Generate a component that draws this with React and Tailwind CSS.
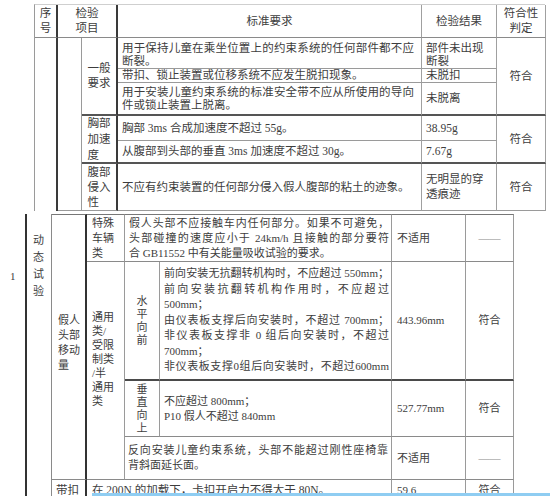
import React from "react";

const L = ({ lines, j = [], className = "" }) => (
  <div className={className}>
    {lines.map((t, i) => (
      <div key={i} className={j.includes(i) ? "[text-align-last:justify] text-justify" : ""}>
        {t}
      </div>
    ))}
  </div>
);

export default function App() {
  return (
    <div className="relative h-[496px] w-[550px] overflow-hidden bg-white text-[#3d3d3d] font-['Liberation_Serif','Noto_Sans_CJK_SC',serif]">
      {/* top piece */}
      <div className="ml-[34px] mt-[4px] grid w-[511px] grid-cols-[23px_24px_36px_304px_75px_49px] grid-rows-[33px_31px_14px_33px_25px_23px_47px] border-l border-t border-l-[#9a9a9a] border-t-[#cfcfcf] text-[11.5px] leading-[13px]">
        {/* header */}
        <div className="col-start-1 row-start-1 flex items-center justify-center border-b border-r-2 border-b-[#8a8a8a] border-r-[#3a3a3a] text-center">
          <L lines={["序", "号"]} className="leading-[15px]" />
        </div>
        <div className="col-start-2 col-span-2 row-start-1 flex items-center justify-center border-b border-r-2 border-b-[#8a8a8a] border-r-[#3a3a3a] text-center">
          <L lines={["检验", "项目"]} className="leading-[15px]" />
        </div>
        <div className="col-start-4 row-start-1 flex items-center justify-center border-b border-r border-b-[#8a8a8a] border-r-[#a0a0a0]">
          标准要求
        </div>
        <div className="col-start-5 row-start-1 flex items-center justify-center border-b border-r border-b-[#8a8a8a] border-r-[#a0a0a0]">
          检验结果
        </div>
        <div className="col-start-6 row-start-1 flex items-center justify-center border-b border-r border-b-[#8a8a8a] border-r-[#a0a0a0] text-center">
          <L lines={["符合性", "判定"]} className="leading-[15px]" />
        </div>

        {/* left blank columns */}
        <div className="col-start-1 row-start-2 row-span-6 border-r-2 border-r-[#3a3a3a]" />
        <div className="col-start-2 row-start-2 row-span-6 border-b border-r border-b-[#9a9a9a] border-r-[#9a9a9a]" />

        {/* 一般要求 */}
        <div className="col-start-3 row-start-2 row-span-3 flex items-center justify-center border-b-2 border-r-2 border-b-[#555] border-r-[#3a3a3a]">
          <L lines={["一般", "要求"]} className="leading-[15px]" />
        </div>
        <div className="col-start-4 row-start-2 border-b border-r border-b-[#9a9a9a] border-r-[#a0a0a0] pl-[4px] pr-[7px] pt-[4px]">
          <L lines={["用于保持儿童在乘坐位置上的约束系统的任何部件都不应", "断裂。"]} j={[0]} />
        </div>
        <div className="col-start-5 row-start-2 border-b border-r border-b-[#9a9a9a] border-r-[#a0a0a0] pl-[4px] pt-[4px]">
          <L lines={["部件未出现", "断裂"]} />
        </div>
        <div className="col-start-4 row-start-3 flex items-center border-b border-r border-b-[#9a9a9a] border-r-[#a0a0a0] pl-[4px]">
          带扣、锁止装置或位移系统不应发生脱扣现象。
        </div>
        <div className="col-start-5 row-start-3 flex items-center border-b border-r border-b-[#9a9a9a] border-r-[#a0a0a0] pl-[4px]">
          未脱扣
        </div>
        <div className="col-start-4 row-start-4 flex items-center border-b-2 border-r border-b-[#555] border-r-[#a0a0a0] pl-[4px] pr-[7px]">
          <L lines={["用于安装儿童约束系统的标准安全带不应从所使用的导向", "件或锁止装置上脱离。"]} j={[0]} className="w-full" />
        </div>
        <div className="col-start-5 row-start-4 flex items-center border-b-2 border-r border-b-[#555] border-r-[#a0a0a0] pl-[4px]">
          未脱离
        </div>
        <div className="col-start-6 row-start-2 row-span-3 flex items-center justify-center border-b-2 border-r border-b-[#555] border-r-[#a0a0a0]">
          符合
        </div>

        {/* 胸部加速度 */}
        <div className="col-start-3 row-start-5 row-span-2 flex items-center justify-center border-b-2 border-r-2 border-b-[#555] border-r-[#3a3a3a]">
          <L lines={["胸部", "加速", "度"]} className="leading-[16px]" />
        </div>
        <div className="col-start-4 row-start-5 flex items-center border-b border-r border-b-[#9a9a9a] border-r-[#a0a0a0] pl-[4px]">
          胸部 3ms 合成加速度不超过 55g。
        </div>
        <div className="col-start-5 row-start-5 flex items-center border-b border-r border-b-[#9a9a9a] border-r-[#a0a0a0] pl-[4px]">
          38.95g
        </div>
        <div className="col-start-4 row-start-6 flex items-center border-b-2 border-r border-b-[#555] border-r-[#a0a0a0] pl-[4px]">
          从腹部到头部的垂直 3ms 加速度不超过 30g。
        </div>
        <div className="col-start-5 row-start-6 flex items-center border-b-2 border-r border-b-[#555] border-r-[#a0a0a0] pl-[4px]">
          7.67g
        </div>
        <div className="col-start-6 row-start-5 row-span-2 flex items-center justify-center border-b-2 border-r border-b-[#555] border-r-[#a0a0a0]">
          符合
        </div>

        {/* 腹部侵入性 */}
        <div className="col-start-3 row-start-7 flex items-center justify-center border-b border-r-2 border-b-[#9a9a9a] border-r-[#3a3a3a]">
          <L lines={["腹部", "侵入", "性"]} className="leading-[15px]" />
        </div>
        <div className="col-start-4 row-start-7 flex items-center border-b border-r border-b-[#9a9a9a] border-r-[#a0a0a0] pl-[4px]">
          不应有约束装置的任何部分侵入假人腹部的粘土的迹象。
        </div>
        <div className="col-start-5 row-start-7 flex items-center border-b border-r border-b-[#9a9a9a] border-r-[#a0a0a0] pl-[4px]">
          <L lines={["无明显的穿", "透痕迹"]} className="leading-[15px]" />
        </div>
        <div className="col-start-6 row-start-7 flex items-center justify-center border-b border-r border-b-[#9a9a9a] border-r-[#a0a0a0]">
          符合
        </div>
      </div>

      {/* bottom piece */}
      <div className="mt-[3px] grid w-[514px] grid-cols-[27px_25px_35px_38px_35px_232px_74px_48px] grid-rows-[48px_119px_56px_43px_30px] text-[11px] leading-[15px]">
        <div className="col-start-1 row-start-1 row-span-5 border-r-2 border-r-[#333] pl-[10px] pt-[55px]">
          1
        </div>
        <div className="col-start-2 row-start-1 row-span-5 border-r border-r-[#8a8a8a] pl-[6px] pt-[18px]">
          <L lines={["动", "态", "试", "验"]} className="leading-[17px]" />
        </div>
        <div className="col-start-3 row-start-1 row-span-4 flex items-center border-b border-r-2 border-t border-b-[#8a8a8a] border-r-[#333] border-t-[#777] pb-[8px] pl-[6px]">
          <L lines={["假人", "头部", "移动", "量"]} className="leading-[15px]" />
        </div>
        <div className="col-start-3 row-start-5 border-r-2 border-r-[#333] pl-[4px] pt-[3px] text-[11.5px]">
          带扣
        </div>

        {/* 特殊车辆类 */}
        <div className="col-start-4 row-start-1 flex items-center border-b border-r border-t border-b-[#8a8a8a] border-r-[#9a9a9a] border-t-[#777] pl-[5px]">
          <L lines={["特殊", "车辆", "类"]} />
        </div>
        <div className="col-start-5 col-span-2 row-start-1 flex items-center border-b border-r border-t border-b-[#8a8a8a] border-r-[#9a9a9a] border-t-[#777] pl-[4px] pr-[2px]">
          <L
            lines={[
              "假人头部不应接触车内任何部分。如果不可避免，",
              "头部碰撞的速度应小于 24km/h 且接触的部分要符",
              "合 GB11552 中有关能量吸收试验的要求。",
            ]}
            j={[0, 1]}
            className="w-full"
          />
        </div>
        <div className="col-start-7 row-start-1 flex items-center border-b border-r border-t border-b-[#8a8a8a] border-r-[#9a9a9a] border-t-[#777] pl-[5px]">
          不适用
        </div>
        <div className="col-start-8 row-start-1 flex items-center justify-center border-b border-r border-t border-b-[#8a8a8a] border-r-[#9a9a9a] border-t-[#777] text-[#888]">
          ——
        </div>

        {/* 通用类 */}
        <div className="col-start-4 row-start-2 row-span-3 border-b border-r border-b-[#8a8a8a] border-r-[#9a9a9a] pl-[5px] pt-[48px]">
          <L lines={["通用", "类/", "受限", "制类", "/半", "通用", "类"]} className="leading-[14px]" />
        </div>

        {/* 水平向前 */}
        <div className="col-start-5 row-start-2 flex items-center justify-center border-b-2 border-r border-b-[#4a4a4a] border-r-[#9a9a9a]">
          <L lines={["水", "平", "向", "前"]} className="leading-[13px]" />
        </div>
        <div className="col-start-6 row-start-2 flex items-center border-b-2 border-r border-b-[#4a4a4a] border-r-[#9a9a9a] pl-[4px] pr-[2px]">
          <L
            lines={[
              "前向安装无抗翻转机构时，不应超过 550mm；",
              "前向安装抗翻转机构作用时，不应超过",
              "500mm；",
              "由仪表板支撑后向安装时，不超过 700mm；",
              "非仪表板支撑非 0 组后向安装时，不超过",
              "700mm；",
              "非仪表板支撑0组后向安装时，不超过600mm",
            ]}
            j={[0, 1, 3, 4, 6]}
            className="w-full leading-[15.5px]"
          />
        </div>
        <div className="col-start-7 row-start-2 flex items-center border-b-2 border-r border-b-[#4a4a4a] border-r-[#9a9a9a] pl-[5px]">
          443.96mm
        </div>
        <div className="col-start-8 row-start-2 flex items-center justify-center border-b-2 border-r border-b-[#4a4a4a] border-r-[#9a9a9a]">
          符合
        </div>

        {/* 垂直向上 */}
        <div className="col-start-5 row-start-3 flex items-center justify-center border-b border-r border-b-[#8a8a8a] border-r-[#9a9a9a]">
          <L lines={["垂", "直", "向", "上"]} className="leading-[13px]" />
        </div>
        <div className="col-start-6 row-start-3 flex items-center border-b border-r border-b-[#8a8a8a] border-r-[#9a9a9a] pl-[4px]">
          <L lines={["不应超过 800mm；", "P10 假人不超过 840mm"]} />
        </div>
        <div className="col-start-7 row-start-3 flex items-center border-b border-r border-b-[#8a8a8a] border-r-[#9a9a9a] pl-[5px]">
          527.77mm
        </div>
        <div className="col-start-8 row-start-3 flex items-center justify-center border-b border-r border-b-[#8a8a8a] border-r-[#9a9a9a]">
          符合
        </div>

        {/* 反向安装 */}
        <div className="col-start-5 col-span-2 row-start-4 flex items-center border-b border-r border-b-[#8a8a8a] border-r-[#9a9a9a] pl-[3px] pr-[3px]">
          <L lines={["反向安装儿童约束系统，头部不能超过刚性座椅靠", "背斜面延长面。"]} j={[0]} className="w-full" />
        </div>
        <div className="col-start-7 row-start-4 flex items-center border-b border-r border-b-[#8a8a8a] border-r-[#9a9a9a] pl-[5px]">
          不适用
        </div>
        <div className="col-start-8 row-start-4 flex items-center justify-center border-b border-r border-b-[#8a8a8a] border-r-[#9a9a9a] text-[#888]">
          ——
        </div>

        {/* 带扣 row */}
        <div className="col-start-4 col-span-3 row-start-5 border-r border-r-[#9a9a9a] pl-[5px] pt-[3px] text-[11.5px]">
          在 200N 的加载下，卡扣开启力不得大于 80N。
        </div>
        <div className="col-start-7 row-start-5 border-r border-r-[#9a9a9a] pl-[5px] pt-[3px]">
          59.6
        </div>
        <div className="col-start-8 row-start-5 border-r border-r-[#9a9a9a] pt-[3px] text-center">
          符合
        </div>
      </div>

      <div className="absolute bottom-0 left-[92px] right-0 h-[3px] bg-[#8fcdf2]" />
    </div>
  );
}
